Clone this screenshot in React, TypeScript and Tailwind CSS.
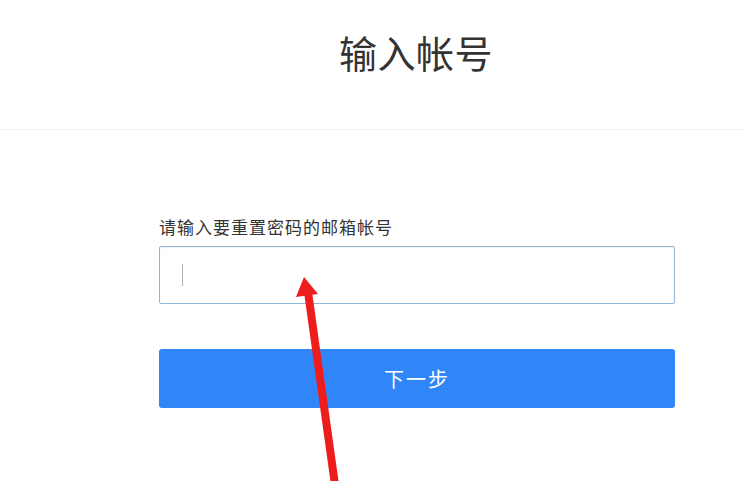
const font = { fontFamily: '"Noto Sans CJK SC", "Noto Sans", sans-serif' }

function Arrow() {
  return (
    <svg
      className="absolute left-0 top-0 pointer-events-none"
      width="744"
      height="481"
      viewBox="0 0 744 481"
    >
      <line x1="308" y1="292" x2="336" y2="492" stroke="#ee1d1d" strokeWidth="8" />
      <polygon points="304,277 318,294 296,297" fill="#ee1d1d" />
    </svg>
  )
}

export default function App() {
  return (
    <div className="relative w-[744px] h-[481px] overflow-hidden bg-white" style={font}>
      <div className="h-[130px] border-b border-[#f0f0f0]">
        <h1 className="pt-[31px] pl-[339px] text-[38px] leading-[42px] text-[#333] tracking-[0.5px]">
          输入帐号
        </h1>
      </div>

      <div className="pl-[159px] pt-[87px] w-[675px]">
        <label className="block text-[17px] leading-[20px] text-[#333] tracking-[1px]">
          请输入要重置密码的邮箱帐号
        </label>
        <div className="mt-[9px] h-[58px] rounded-[2px] border border-[#8db6d8] shadow-[inset_0_1px_2px_rgba(0,0,0,0.06)] flex items-center pl-[22px]">
          <span className="w-px h-[22px] bg-[#b0b0b0]" />
        </div>
        <button className="mt-[45px] w-full h-[59px] rounded-[3px] bg-[#3086f7] text-white text-[20px] tracking-[2px] flex items-center justify-center">
          下一步
        </button>
      </div>

      <Arrow />
    </div>
  )
}
